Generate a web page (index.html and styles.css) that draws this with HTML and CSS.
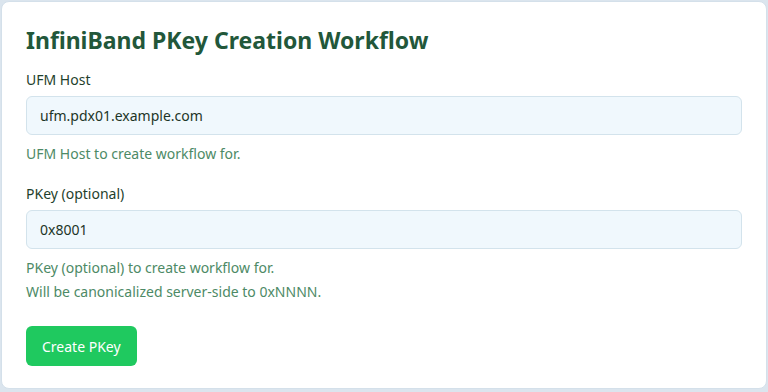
FILE: index.html
```html
<!DOCTYPE html>
<html>
<head>
<meta charset="utf-8">
<link rel="stylesheet" href="styles.css">
</head>
<body>
<div class="card">
  <h1 class="title">InfiniBand PKey Creation Workflow</h1>
  <div class="field">
    <label class="label">UFM Host</label>
    <div class="input">ufm.pdx01.example.com</div>
    <div class="help">UFM Host to create workflow for.</div>
  </div>
  <div class="field">
    <label class="label">PKey (optional)</label>
    <div class="input">0x8001</div>
    <div class="help">PKey (optional) to create workflow for.<br>Will be canonicalized server-side to 0xNNNN.</div>
  </div>
  <div class="actions">
    <button class="btn">Create PKey</button>
  </div>
</div>
</body>
</html>
```
FILE: styles.css
```css
html, body {
  margin: 0;
  padding: 0;
  background: #dbe5ee;
}
body {
  padding: 1px 1px 0 1px;
  font-family: "Noto Sans", "Open Sans", sans-serif;
  height: 392px;
  box-sizing: border-box;
}
.card {
  background: #ffffff;
  border: 1px solid #d4e0ea;
  border-radius: 8px;
  height: 388px;
  box-sizing: border-box;
  padding: 23px 24px 0 24px;
  display: flex;
  flex-direction: column;
}
.title {
  margin: 0;
  font-size: 23px;
  line-height: 30px;
  font-weight: 700;
  color: #22573a;
}
.field {
  display: flex;
  flex-direction: column;
}
.field:first-of-type {
  margin-top: 15px;
}
.field + .field {
  margin-top: 18px;
}
.label {
  font-size: 14px;
  line-height: 20px;
  color: #1f3f2d;
}
.input {
  margin-top: 6px;
  height: 39px;
  box-sizing: border-box;
  background: #f0f8fd;
  border: 1px solid #d3e3ec;
  border-radius: 6px;
  padding: 0 13px;
  display: flex;
  align-items: center;
  font-size: 14px;
  color: #1d3527;
}
.help {
  margin-top: 7px;
  font-size: 14px;
  line-height: 24px;
  color: #4d8a66;
}
.actions {
  margin-top: 22px;
}
.btn {
  font-family: inherit;
  background: #1fc95f;
  color: #ffffff;
  border: none;
  border-radius: 6px;
  height: 40px;
  padding: 0 16px;
  font-size: 14px;
  cursor: pointer;
}
```
